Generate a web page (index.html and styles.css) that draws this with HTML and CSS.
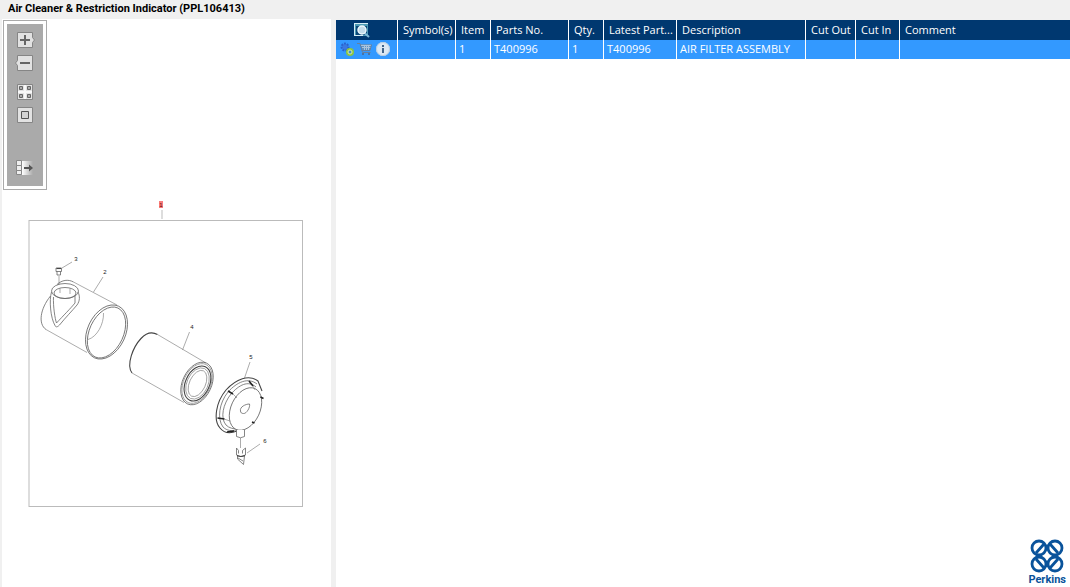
FILE: index.html
```html
<!DOCTYPE html>
<html lang="en">
<head>
  <meta charset="UTF-8" />
  <meta name="viewport" content="width=device-width, initial-scale=1.0" />
  <title>Air Cleaner &amp; Restriction Indicator (PPL106413)</title>
  <link rel="stylesheet" href="styles.css">
</head>
<body>
  <header>
    <h1>Air Cleaner &amp; Restriction Indicator (PPL106413)</h1>
  </header>
  <main>
    <section class="drawing-pane">
      <div class="toolbar">
        <button type="button" aria-label="Zoom in">
          <svg viewBox="0 0 20 18">
            <path class="face" d="M2.500 1.500h15v5l2 2.500l-2 2.500v5h-15z"/>
            <path class="glyph" d="M5 9h10M10 4v10"/>
          </svg>
        </button>
        <button type="button" aria-label="Zoom out">
          <svg viewBox="0 0 20 18">
            <path class="face" d="M2.500 1.500h15v15h-15v-5l-2-2.500l2-2.500z"/>
            <path class="glyph" d="M5 9h10"/>
          </svg>
        </button>
        <button type="button" class="gap-above" aria-label="Fit all">
          <svg viewBox="0 0 20 18">
            <path class="face" d="M2.500 1.500h15v15h-15z"/>
            <path class="cross" d="M10 2v14M3 9h14"/>
            <path class="tiles" d="M4.500 3.500h3v3h-3zM12.500 3.500h3v3h-3zM4.500 11.500h3v3h-3zM12.500 11.500h3v3h-3z"/>
          </svg>
        </button>
        <button type="button" aria-label="Actual size">
          <svg viewBox="0 0 20 18">
            <path class="face" d="M2.500 1.500h15v15h-15z"/>
            <path class="box" d="M6.500 5.500h7v7h-7z"/>
          </svg>
        </button>
        <button type="button" class="to-end" aria-label="Toggle list">
          <svg viewBox="0 0 20 18">
            <defs>
              <linearGradient id="fade">
                <stop offset="0" stop-color="#fff"/>
                <stop offset="1" stop-color="#aaa"/>
              </linearGradient>
            </defs>
            <path class="list" d="M1.500 1.500h5v5h-5zM1.500 6.500h5v5h-5zM1.500 11.500h5v4h-5z"/>
            <path fill="url(#fade)" d="M7 2h11v14H7z"/>
            <path class="arrow" d="M9 9h7"/>
            <path fill="#555" d="M14 5.500l4 3.500l-4 3.500z"/>
          </svg>
        </button>
      </div>
      <svg class="drawing" viewBox="2 190 329 320" role="img" aria-label="Exploded view">
        <!-- callout 1 and frame -->
        <rect x="159" y="201" width="4" height="7" fill="#f77c7c"/>
        <text class="callout active" x="161" y="207">1</text>
        <path stroke="#ddd" stroke-width="2" d="M162 210v9"/>
        <rect class="frame" x="29" y="220.500" width="273.500" height="286"/>

        <!-- leaders -->
        <g class="leader">
          <path d="M59 276v9M62 268l10-6M103 277l-9.500 15M189.500 332l-7 18M250 362l-5.500 16M247 453l13-9M240.500 438v10"/>
        </g>
        <text class="callout" x="76" y="261">3</text>
        <text class="callout" x="105" y="274">2</text>
        <text class="callout" x="192" y="329">4</text>
        <text class="callout" x="251" y="359">5</text>
        <text class="callout" x="265" y="443">6</text>

        <!-- plug -->
        <path class="part" d="M56 268h5.500v3.500h-5.500zM57 271.500v3.500h3.500v-3.500"/>
        <path class="part heavy" d="M56.500 268.500h4.500"/>

        <!-- housing -->
        <path class="part" d="M57 284.500C62 280 68 279 73.500 282M50.500 296C40 309 38 324 46 329.500"/>
        <path class="thin" d="M73.500 282L117 305M46 329.500L87 352.500M103.500 313C104 324 97 337 88 339.500"/>
        <ellipse class="part" cx="106.500" cy="332" rx="19" ry="28.500" transform="rotate(25 106.500 332)"/>
        <ellipse class="part" cx="106.500" cy="332.500" rx="17" ry="27" transform="rotate(25 106.500 332.500)"/>
        <ellipse class="part" cx="65" cy="291" rx="13.500" ry="7.500"/>
        <ellipse class="part" cx="65" cy="293" rx="11" ry="5.500"/>
        <path class="part" d="M51.500 292C49 300 50.500 318 55 325.500C56 328 58 326.500 59.500 325C66 317 72 311 77 305C80 301 80 296 78 292M53.500 297C53 306 55 319 56.500 323C63 316 71 308 75 303V296"/>
        <path class="thin" d="M60 288v5M70 288v6"/>

        <!-- element -->
        <path class="part heavy" d="M132 373C126 365 133 347 141 338.500C147 332 153 332 157.500 334.500"/>
        <path class="thin" d="M157.500 334.500L206 363M132 373L184 402.500"/>
        <ellipse class="part" cx="197" cy="383.500" rx="14.500" ry="22.500" transform="rotate(25 197 383.500)"/>
        <ellipse class="thin" cx="197" cy="383.500" rx="13.500" ry="21" transform="rotate(25 197 383.500)"/>
        <ellipse class="part heavy" cx="197.500" cy="383.500" rx="12" ry="18.500" transform="rotate(25 197.500 383.500)"/>
        <ellipse class="thin" cx="197.500" cy="383.500" rx="10.500" ry="16.500" transform="rotate(25 197.500 383.500)"/>
        <ellipse class="thin" cx="197.500" cy="383.500" rx="8" ry="14" transform="rotate(25 197.500 383.500)"/>

        <!-- end cover -->
        <path class="part heavy" d="M262 391L258 381C249 374 236 379 226 390C216 402 213 420 220 428C224 433 230 434 237 431"/>
        <path class="part" d="M257 384C248 377 237 382 228 392C219 403 217 419 223 427C227 431 232 431 236 430M256 387C248 380 239 385 231 394C223 404 220 418 226 425C229 428 233 429 238 429"/>
        <ellipse class="part cover" cx="245.500" cy="409" rx="14.500" ry="22.500" transform="rotate(25 245.500 409)"/>
        <path class="part" d="M240.500 411c-1-4 5-7 9-7c1 3-3 10-6 9.500c-2 0-3-1-3-2.500z"/>
        <path class="clip" d="M228 391l5 3M249 381l4 5M217.500 418l7 1M227 432l7-1M260.500 397l3 1.500M252 422l2.500 1"/>
        <path class="thin" d="M233 394l4 4M253 386l2 4M224 419l6 2"/>
        <path class="part cover" d="M236.500 430v6.500q4 2.500 8 0v-6.500"/>

        <!-- dust valve -->
        <path class="part" d="M236.500 448v7q4 3 9 0v-7M237.500 455v4l6 5.500l1-8.500M236.500 448l2 2.500v3M245.500 448l-3 2.500v3M238 458l5 3"/>
        <path class="part heavy" d="M237 455.500q4 2 8 0"/>
      </svg>
    </section>

    <section class="parts-pane">
      <table>
        <colgroup>
          <col class="w-tools"><col class="w-symbol"><col class="w-small"><col class="w-parts"><col class="w-small">
          <col class="w-latest"><col class="w-desc"><col class="w-out"><col class="w-in"><col>
        </colgroup>
        <thead>
          <tr>
            <th class="tools">
              <button type="button" aria-label="Search parts">
                <svg width="18" height="16" viewBox="0 0 18 16">
                  <path fill="#4d9ab5" d="M1 1h14v13H1z"/>
                  <path fill="#0a4778" d="M3 4h11v9H3z"/>
                  <path stroke="#d5edf5" d="M1 1.500h14M1.500 1v13M1 13.500h9"/>
                  <path stroke="#7fb7d6" stroke-width="2" d="M11.500 11l4.500 4"/>
                  <circle cx="9" cy="8" r="4" fill="#c5dcea" stroke="#eef8fc" stroke-width="1.500"/>
                </svg>
              </button>
            </th>
            <th>Symbol(s)</th>
            <th>Item</th>
            <th>Parts No.</th>
            <th>Qty.</th>
            <th>Latest Part...</th>
            <th>Description</th>
            <th>Cut Out</th>
            <th>Cut In</th>
            <th>Comment</th>
          </tr>
        </thead>
        <tbody>
          <tr>
            <td class="tools">
              <div class="row-tools">
                <button type="button" aria-label="Related parts">
                  <svg width="16" height="16" viewBox="0 0 16 16">
                    <circle cx="6" cy="6" r="3" fill="#3a78e0"/>
                    <circle cx="6" cy="6" r="3.500" fill="none" stroke="#2a62cc" stroke-width="2" stroke-dasharray="2 1"/>
                    <circle cx="11" cy="11" r="3" fill="#3a8fd0" stroke="#8cc63f" stroke-width="2"/>
                    <circle cx="11" cy="11" r="2" fill="none" stroke="#d4e8a8"/>
                  </svg>
                </button>
                <button type="button" aria-label="Add to cart">
                  <svg width="16" height="16" viewBox="0 0 16 16">
                    <path fill="#5f92c4" d="M3 3h11l-1 6H5z"/>
                    <path fill="none" stroke="#a9c4dd" d="M4 4.500h10M5 6.500h9M7.500 4v5M9.500 4v5M11.500 4v5"/>
                    <path fill="none" stroke="#667f9e" d="M0 2.500h3l2.500 9h8M5 9.500h8l1.500-6"/>
                    <circle cx="6" cy="13" r="1" fill="#50678a"/>
                    <circle cx="12" cy="13" r="1" fill="#50678a"/>
                  </svg>
                </button>
                <button type="button" aria-label="Part information">
                  <svg width="16" height="16" viewBox="0 0 16 16">
                    <circle cx="8" cy="8" r="7" fill="#dce8f3"/>
                    <circle cx="8" cy="8" r="6.500" fill="none" stroke="#b4cce2"/>
                    <path fill="#41658a" d="M7 4h2v2H7zM7 7h2v5H7z"/>
                  </svg>
                </button>
              </div>
            </td>
            <td></td>
            <td>1</td>
            <td>T400996</td>
            <td>1</td>
            <td>T400996</td>
            <td>AIR FILTER ASSEMBLY</td>
            <td></td>
            <td></td>
            <td></td>
          </tr>
        </tbody>
      </table>
      <div class="brand">
        <svg width="34" height="34" viewBox="0 0 34 34" aria-hidden="true">
          <g fill="none" stroke="#0a539b" stroke-width="2.800">
            <circle cx="9" cy="9" r="7"/>
            <circle cx="25" cy="9" r="7"/>
            <circle cx="9" cy="25" r="7"/>
            <circle cx="25" cy="25" r="7"/>
            <path d="M6 14L14 5M20 5l8 9M6 20l8 9M20 29l8-9"/>
            <path d="M6 17h6M22 17h6M17 6v5M17 23v5"/>
          </g>
        </svg>
        <span>Perkins</span>
      </div>
    </section>
  </main>
</body>
</html>
```
FILE: styles.css
```css
* {
  box-sizing: border-box;
}
body {
  margin: 0;
  min-height: 100vh;
  display: flex;
  flex-direction: column;
  background: #f0f0f0;
  color: #000;
  font-family: "Open Sans", "Noto Sans", sans-serif;
  font-size: 11px;
}
header {
  height: 19px;
  padding: 0 8px;
}
h1 {
  margin: 0;
  font-family: Roboto, sans-serif;
  font-size: 11px;
  line-height: 18px;
  font-weight: bold;
}
button {
  display: block;
  padding: 0;
  border: none;
  background: none;
  cursor: pointer;
}
button svg {
  display: block;
}
main {
  flex: 1;
  display: grid;
  grid-template-columns: 329px 1fr;
  gap: 5px;
  padding-left: 2px;
}
.drawing-pane {
  background: #fff;
}

/* toolbar */
.toolbar {
  display: flex;
  flex-direction: column;
  align-items: center;
  gap: 5px;
  width: 44px;
  height: 170px;
  margin: 1px 0 0 1px;
  padding: 10px 0 5px;
  border: 1px solid #aaa;
  background: #aaa;
  box-shadow: inset 0 0 0 3px #fff;
}
.toolbar button {
  width: 20px;
  height: 18px;
}
.toolbar .gap-above {
  margin-top: 6px;
}
.toolbar .to-end {
  margin-top: 30px;
}
.face {
  fill: #e2e2e2;
  stroke: #858585;
}
.glyph {
  stroke: #666;
  stroke-width: 2;
}
.cross {
  stroke: #f8f8f8;
  stroke-width: 2;
}
.tiles {
  fill: #aaa;
  stroke: #666;
}
.box {
  fill: #d4d4d4;
  stroke: #555;
}
.list {
  fill: #eee;
  stroke: #888;
}
.arrow {
  stroke: #555;
  stroke-width: 2;
}

/* exploded view */
.drawing {
  display: block;
  width: 100%;
}
.drawing path,
.drawing ellipse {
  fill: none;
}
.frame {
  fill: none;
  stroke: #bbb;
}
.leader path {
  stroke: #888;
  stroke-width: 0.7;
}
.part {
  stroke: #666;
  stroke-width: 0.8;
}
.thin {
  stroke: #888;
  stroke-width: 0.7;
}
.heavy {
  stroke: #444;
  stroke-width: 1.1;
}
.clip {
  stroke: #222;
  stroke-width: 1.6;
}
.drawing .cover {
  fill: #fff;
}
.callout {
  font-family: "Liberation Sans", sans-serif;
  font-size: 6px;
  text-anchor: middle;
  fill: #222;
}
.callout.active {
  fill: #600;
}

/* parts list */
.parts-pane {
  display: flex;
  flex-direction: column;
  min-width: 0;
  background: #fff;
  border-top: 1px solid #f0f0f0;
}
table {
  width: 100%;
  table-layout: fixed;
  border-collapse: separate;
  border-spacing: 0;
  color: #fff;
}
th,
td {
  text-align: left;
  white-space: nowrap;
  font-weight: normal;
  line-height: 16px;
  border-right: 1px solid #fff;
}
th:last-child,
td:last-child {
  border-right: none;
}
th {
  height: 20px;
  padding: 0 0 1px 5px;
  background: #003870;
}
td {
  height: 19px;
  padding: 0 3px 2px;
  background: #39f;
}
th.tools button {
  margin-left: 12px;
}
.row-tools {
  display: flex;
  align-items: center;
  gap: 2px;
}
.w-tools { width: 62px; }
.w-symbol { width: 58px; }
.w-small { width: 35px; }
.w-parts { width: 78px; }
.w-latest { width: 73px; }
.w-desc { width: 129px; }
.w-out { width: 50px; }
.w-in { width: 44px; }

.brand {
  display: flex;
  flex-direction: column;
  align-items: center;
  align-self: flex-end;
  margin: auto 4px 0 0;
  color: #0a539b;
  font-family: Roboto, sans-serif;
  font-size: 11px;
  line-height: 14px;
  font-weight: bold;
}
```
